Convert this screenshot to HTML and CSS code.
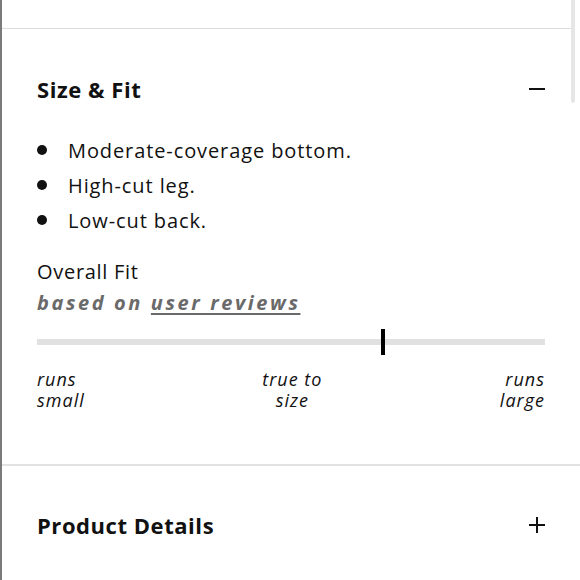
FILE: index.html
```html
<!DOCTYPE html>
<html>
<head>
<meta charset="utf-8">
<link rel="stylesheet" href="styles.css">
</head>
<body>
<div class="frame">
  <div class="top-space"></div>
  <section class="panel open">
    <div class="panel-head">
      <h2 class="panel-title">Size &amp; Fit</h2>
      <span class="toggle minus"></span>
    </div>
    <ul class="bullets">
      <li>Moderate-coverage bottom.</li>
      <li>High-cut leg.</li>
      <li>Low-cut back.</li>
    </ul>
    <div class="fit">
      <div class="fit-title">Overall Fit</div>
      <div class="fit-sub">based on <span class="link">user reviews</span></div>
      <div class="track"><span class="marker" style="left: 67.7%"></span></div>
      <div class="scale">
        <span class="lab left"><span class="ln">runs</span><span class="ln">small</span></span>
        <span class="lab mid"><span class="ln">true to</span><span class="ln">size</span></span>
        <span class="lab right"><span class="ln">runs</span><span class="ln">large</span></span>
      </div>
    </div>
  </section>
  <section class="panel closed">
    <div class="panel-head">
      <h2 class="panel-title">Product Details</h2>
      <span class="toggle plus"></span>
    </div>
  </section>
  <div class="scrollbar"></div>
</div>
</body>
</html>
```
FILE: styles.css
```css
html, body {
  margin: 0;
  padding: 0;
  background: #fff;
}
body {
  font-family: "Open Sans", "Noto Sans", sans-serif;
  color: #111;
}
.frame {
  position: relative;
  width: 580px;
  height: 580px;
  overflow: hidden;
  border-left: 2px solid #7a7a7a;
  box-sizing: border-box;
}
.top-space {
  height: 28px;
  border-bottom: 1px solid #dcdcdc;
  margin-right: 6px;
}
.panel {
  padding: 0 35px;
}
.panel.open {
  border-bottom: 2px solid #e2e2e2;
  padding-bottom: 53px;
}
.panel-head {
  display: flex;
  align-items: center;
  justify-content: space-between;
  padding-top: 45px;
  height: 30px;
}
.open .panel-head {
  margin-bottom: 29px;
}
.closed .panel-head {
  padding-top: 44px;
}
.panel-title {
  margin: 0;
  font-size: 22px;
  line-height: 30px;
  font-weight: 700;
  letter-spacing: 0.55px;
}
.toggle {
  position: relative;
  width: 16px;
  height: 16px;
}
.toggle::before, .toggle::after {
  content: "";
  position: absolute;
  background: #111;
}
.toggle::before {
  left: 0;
  top: 7px;
  width: 16px;
  height: 2px;
}
.plus::after {
  left: 7px;
  top: 0;
  width: 2px;
  height: 16px;
}
.bullets {
  list-style: none;
  margin: 0;
  padding: 0;
}
.bullets li {
  position: relative;
  padding-left: 31px;
  font-size: 20px;
  line-height: 35px;
  letter-spacing: 0.9px;
}
.bullets li::before {
  content: "";
  position: absolute;
  left: 0;
  top: 12px;
  width: 10px;
  height: 10px;
  border-radius: 50%;
  background: #111;
}
.fit {
  padding-top: 19px;
}
.fit-title {
  font-size: 20px;
  line-height: 30px;
  letter-spacing: 0.7px;
}
.fit-sub {
  font-size: 20px;
  line-height: 32px;
  font-weight: 700;
  font-style: italic;
  color: #6a6a6a;
  letter-spacing: 2.6px;
}
.fit-sub .link {
  text-decoration: underline;
  text-decoration-thickness: 2px;
  text-underline-offset: 3px;
}
.track {
  position: relative;
  margin-top: 20px;
  height: 6px;
  background: #e1e1e1;
}
.marker {
  position: absolute;
  top: -10px;
  width: 4px;
  height: 26px;
  background: #000;
}
.scale {
  display: flex;
  justify-content: space-between;
  margin-top: 24px;
}
.lab {
  display: flex;
  flex-direction: column;
  font-size: 18px;
  font-style: italic;
  line-height: 21px;
  letter-spacing: 1px;
}
.lab.mid { align-items: center; }
.lab.right { align-items: flex-end; }
.scrollbar {
  position: absolute;
  left: 569px;
  top: 0;
  width: 4px;
  height: 103px;
  background: #e6e6e6;
  border-radius: 0 0 2px 2px;
}
```
